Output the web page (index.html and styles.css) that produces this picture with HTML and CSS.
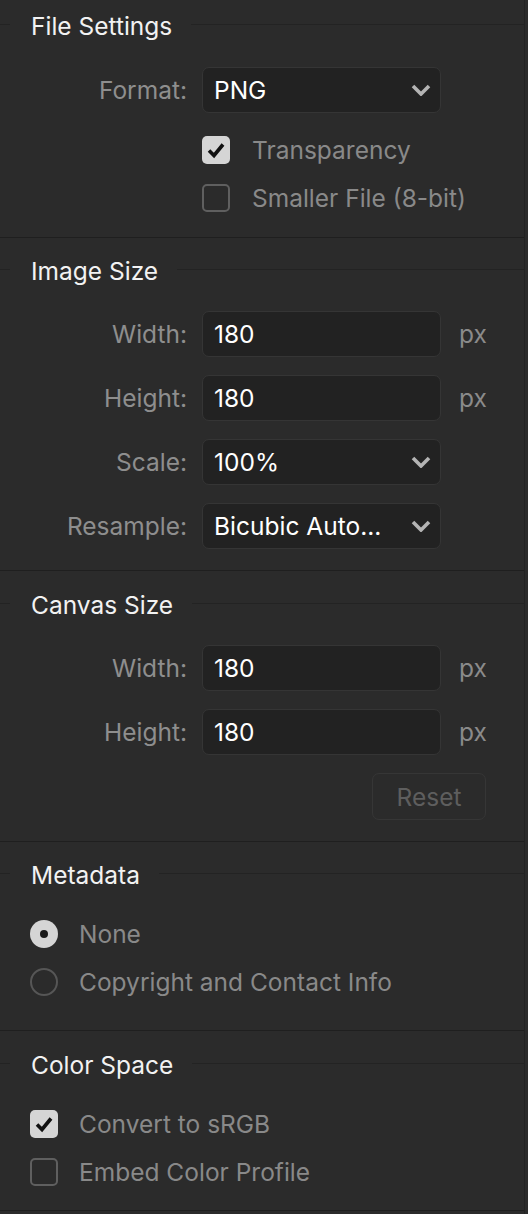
FILE: index.html
```html
<!DOCTYPE html>
<html>
<head>
<meta charset="utf-8">
<link rel="stylesheet" href="styles.css">
</head>
<body>
<div class="panel">

  <section class="section s-file">
    <div class="head"><span class="line-l"></span><span class="title">File Settings</span><span class="line-r"></span></div>
    <div class="row">
      <span class="label">Format:</span>
      <div class="field select"><span class="val">PNG</span><svg class="chev" viewBox="0 0 20 12"><polyline points="2,2 10,10 18,2"/></svg></div>
    </div>
    <div class="checks checks-indent">
      <div class="check"><span class="box on"><svg viewBox="0 0 28 28"><polyline points="7,14.5 12,19.5 21,8.5"/></svg></span><span class="ctext">Transparency</span></div>
      <div class="check"><span class="box"></span><span class="ctext">Smaller File (8-bit)</span></div>
    </div>
  </section>

  <section class="section s-image">
    <div class="head"><span class="line-l"></span><span class="title">Image Size</span><span class="line-r"></span></div>
    <div class="rows">
      <div class="row"><span class="label">Width:</span><div class="field"><span class="val">180</span></div><span class="unit">px</span></div>
      <div class="row"><span class="label">Height:</span><div class="field"><span class="val">180</span></div><span class="unit">px</span></div>
      <div class="row"><span class="label">Scale:</span><div class="field select"><span class="val">100%</span><svg class="chev" viewBox="0 0 20 12"><polyline points="2,2 10,10 18,2"/></svg></div></div>
      <div class="row"><span class="label">Resample:</span><div class="field select"><span class="val">Bicubic Auto...</span><svg class="chev" viewBox="0 0 20 12"><polyline points="2,2 10,10 18,2"/></svg></div></div>
    </div>
  </section>

  <section class="section s-canvas">
    <div class="head"><span class="line-l"></span><span class="title">Canvas Size</span><span class="line-r"></span></div>
    <div class="rows">
      <div class="row"><span class="label">Width:</span><div class="field"><span class="val">180</span></div><span class="unit">px</span></div>
      <div class="row"><span class="label">Height:</span><div class="field"><span class="val">180</span></div><span class="unit">px</span></div>
      <div class="row row-end"><span class="reset">Reset</span></div>
    </div>
  </section>

  <section class="section s-meta">
    <div class="head"><span class="line-l"></span><span class="title">Metadata</span><span class="line-r"></span></div>
    <div class="checks">
      <div class="check"><span class="radio on"><span class="dot"></span></span><span class="ctext">None</span></div>
      <div class="check"><span class="radio"></span><span class="ctext">Copyright and Contact Info</span></div>
    </div>
  </section>

  <section class="section s-color">
    <div class="head"><span class="line-l"></span><span class="title">Color Space</span><span class="line-r"></span></div>
    <div class="checks">
      <div class="check"><span class="box on"><svg viewBox="0 0 28 28"><polyline points="7,14.5 12,19.5 21,8.5"/></svg></span><span class="ctext">Convert to sRGB</span></div>
      <div class="check"><span class="box"></span><span class="ctext">Embed Color Profile</span></div>
    </div>
  </section>

</div>
</body>
</html>
```
FILE: styles.css
```css
html, body {
  margin: 0;
  padding: 0;
  background: #2b2b2b;
}
body {
  font-family: Inter, "Noto Sans", "Liberation Sans", sans-serif;
  font-size: 24.5px;
  color: #8c8c8c;
  width: 528px;
  height: 1214px;
  overflow: hidden;
}
.panel {
  width: 525px;
  border-right: 1px solid #232323;
  min-height: 1214px;
  box-sizing: border-box;
}
.section {
  border-bottom: 1px solid #1f1f1f;
  display: flex;
  flex-direction: column;
}
.head {
  display: flex;
  align-items: center;
  height: 30px;
}
.line-l, .line-r {
  height: 1px;
  background: #232323;
  margin-bottom: 4px;
}
.line-l { width: 10px; margin-right: 21px; }
.line-r { flex: 1; margin-left: 19px; }
.title {
  color: #f2f2f2;
  line-height: 30px;
  white-space: nowrap;
}
.rows {
  display: flex;
  flex-direction: column;
  gap: 18px;
}
.row {
  display: flex;
  align-items: center;
  height: 46px;
}
.label {
  width: 187px;
  text-align: right;
  margin-right: 15px;
  color: #8e8e8e;
  white-space: nowrap;
}
.field {
  width: 239px;
  height: 46px;
  box-sizing: border-box;
  border: 1px solid #353535;
  border-radius: 7px;
  background: #222222;
  display: flex;
  align-items: center;
  padding: 0 9px 0 11px;
  color: #ffffff;
}
.val { flex: 1; white-space: nowrap; }
.chev {
  width: 20px;
  height: 12px;
  fill: none;
  stroke: #b4b4b4;
  stroke-width: 3.6;
  stroke-linejoin: miter;
}
.unit {
  margin-left: 18px;
  color: #8a8a8a;
}
.row-end {
  justify-content: flex-end;
  padding-right: 38px;
  height: 47px;
}
.reset {
  width: 114px;
  height: 47px;
  box-sizing: border-box;
  border: 1px solid #363636;
  border-radius: 7px;
  display: flex;
  align-items: center;
  justify-content: center;
  color: #5e5e5e;
}
.checks {
  display: flex;
  flex-direction: column;
  gap: 20px;
  padding-left: 30px;
}
.checks-indent { padding-left: 202px; }
.check {
  display: flex;
  align-items: center;
  height: 28px;
}
.box, .radio {
  width: 28px;
  height: 28px;
  box-sizing: border-box;
  flex: none;
  display: flex;
  align-items: center;
  justify-content: center;
}
.box {
  border: 2px solid #5f5f5f;
  border-radius: 5px;
}
.box.on {
  border: none;
  background: #d5d5d5;
}
.box svg {
  width: 28px;
  height: 28px;
  fill: none;
  stroke: #111;
  stroke-width: 3.6;
}
.radio {
  border: 2px solid #565656;
  border-radius: 50%;
}
.radio.on {
  border: none;
  background: #d5d5d5;
}
.dot {
  width: 8px;
  height: 8px;
  border-radius: 50%;
  background: #1a1a1a;
}
.ctext {
  margin-left: 21px;
  white-space: nowrap;
  color: #898989;
}
.checks-indent .ctext { margin-left: 22px; }

.s-file { padding: 11px 0 25px; }
.s-file .head { margin-bottom: 26px; }
.s-file .row { margin-bottom: 23px; }
.s-image { padding: 18px 0 21px; }
.s-image .head { margin-bottom: 25px; }
.s-canvas { padding: 19px 0 21px; }
.s-canvas .head { margin-bottom: 25px; }
.s-meta { padding: 18px 0 34px; }
.s-meta .head { margin-bottom: 30px; }
.s-color { padding: 19px 0 24px; }
.s-color .head { margin-bottom: 30px; }
```
